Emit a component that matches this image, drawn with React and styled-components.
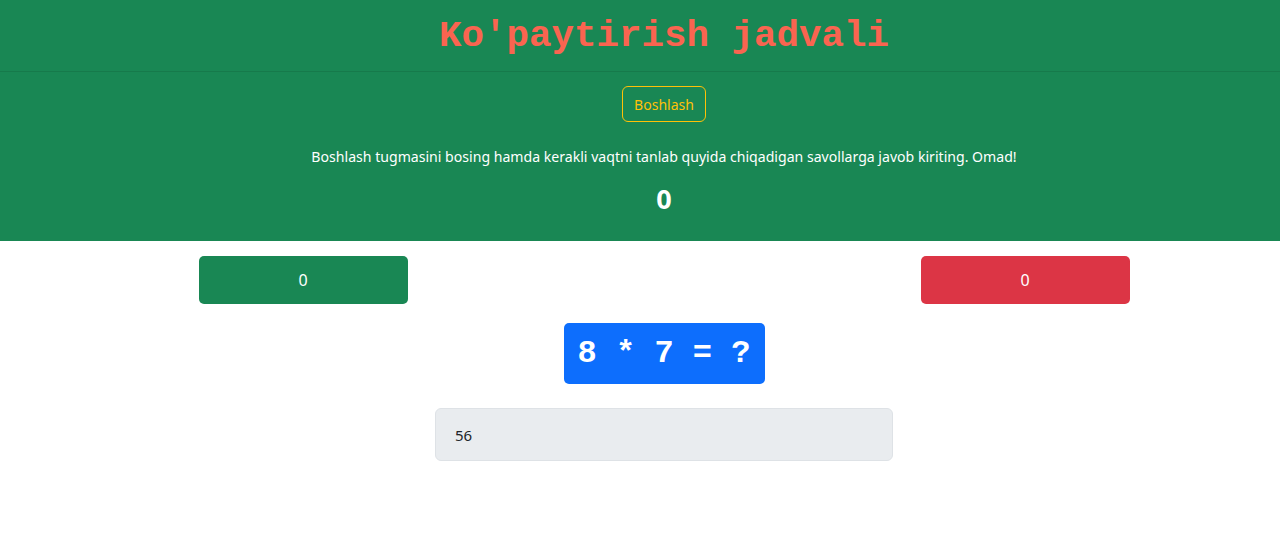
import React from "react";
import styled, { createGlobalStyle } from "styled-components";

const Global = createGlobalStyle`
  html, body { margin: 0; padding: 0; background: #fff; overflow-x: hidden; }
  body { font-family: "Noto Sans", "Open Sans", sans-serif; color: #212529; }
`;

const Page = styled.div`
  min-width: 1328px;
`;

const Header = styled.header`
  background: #198754;
  height: 71px;
  display: flex;
  align-items: center;
  justify-content: center;
  border-bottom: 1px solid #167a4b;
`;

const Title = styled.h1`
  margin: 0;
  font-family: "Liberation Mono", "Courier New", monospace;
  font-weight: 700;
  font-size: 37.5px;
  color: #fa6450;
`;

const Hero = styled.section`
  background: #198754;
  height: 169px;
  display: flex;
  flex-direction: column;
  align-items: center;
  padding-top: 14px;
  box-sizing: border-box;
`;

const StartButton = styled.button`
  height: 36px;
  padding: 0 11px;
  background: transparent;
  border: 1px solid #ffc107;
  border-radius: 6px;
  color: #ffc107;
  font-family: inherit;
  font-size: 14px;
`;

const Info = styled.p`
  margin: 24px 0 0;
  color: #fff;
  font-size: 14.1px;
  line-height: 22px;
`;

const Score = styled.div`
  margin-top: 15px;
  color: #fff;
  font-size: 27px;
  font-weight: 700;
  line-height: 32px;
`;

const Main = styled.main`
  width: 931px;
  margin: 0 auto;
  padding-top: 15px;
  display: flex;
  flex-direction: column;
  align-items: center;
`;

const CounterRow = styled.div`
  width: 100%;
  display: flex;
  justify-content: space-between;
`;

const Counter = styled.div`
  width: 209px;
  height: 48px;
  border-radius: 5px;
  background: ${(p) => p.$bg};
  color: #fff;
  display: flex;
  align-items: center;
  justify-content: center;
  font-size: 16px;
`;

const Question = styled.div`
  margin-top: 19px;
  width: 201px;
  height: 61px;
  border-radius: 5px;
  background: #0d6efd;
  color: #fff;
  display: flex;
  align-items: center;
  justify-content: center;
  font-family: "Liberation Mono", "Courier New", monospace;
  font-weight: 700;
  font-size: 32px;
`;

const Answer = styled.input`
  margin-top: 24px;
  width: 458px;
  height: 53px;
  box-sizing: border-box;
  border: 1px solid #dee2e6;
  border-radius: 6px;
  background: #e9ecef;
  padding: 0 19px;
  font-family: inherit;
  font-size: 15px;
  color: #212529;
  outline: none;
`;

export default function App() {
  return (
    <Page>
      <Global />
      <Header>
        <Title>Ko'paytirish jadvali</Title>
      </Header>
      <Hero>
        <StartButton>Boshlash</StartButton>
        <Info>
          Boshlash tugmasini bosing hamda kerakli vaqtni tanlab quyida chiqadigan savollarga javob kiriting. Omad!
        </Info>
        <Score>0</Score>
      </Hero>
      <Main>
        <CounterRow>
          <Counter $bg="#198754">0</Counter>
          <Counter $bg="#dc3545">0</Counter>
        </CounterRow>
        <Question>8 * 7 = ?</Question>
        <Answer defaultValue="56" />
      </Main>
    </Page>
  );
}
